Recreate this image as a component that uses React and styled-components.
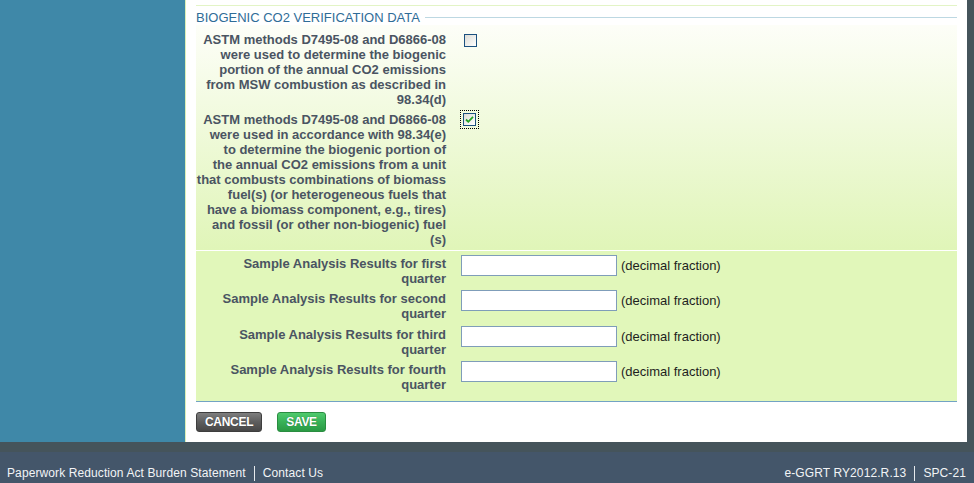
import React from "react";
import styled, { createGlobalStyle } from "styled-components";

const GlobalStyle = createGlobalStyle`
  html, body {
    margin: 0;
    padding: 0;
    background: #44566a;
    font-family: "Liberation Sans", Arial, sans-serif;
  }
`;

const Page = styled.div`
  display: flex;
  flex-direction: column;
  width: 974px;
  height: 483px;
  overflow: hidden;
`;

const Main = styled.div`
  flex: 1;
  display: flex;
  background: #45545b;
  padding: 0 7px 10px 0;
  min-height: 0;
`;

const Sidebar = styled.div`
  width: 185px;
  flex-shrink: 0;
  background: #3f88a8;
`;

const Content = styled.div`
  flex: 1;
  background: #fff;
  border-left: 1px solid #dcefb6;
  padding: 5px 10px 10px 10px;
  display: flex;
  flex-direction: column;
`;

const Section = styled.div`
  border-top: 1px solid #e3f4c6;
`;

const Legend = styled.div`
  display: flex;
  align-items: center;
  height: 16px;
  margin-top: 3px;
  font-size: 13px;
  color: #2f6c97;
  text-transform: uppercase;
  white-space: nowrap;

  &::after {
    content: "";
    flex: 1;
    height: 1px;
    margin-left: 5px;
    background: #bdd8e2;
  }
`;

const CheckBody = styled.div`
  background: linear-gradient(#fdfef8, #e0f5b8);
  padding: 7px 0 3px;
  display: flex;
  flex-direction: column;
  gap: 5px;
`;

const InputBody = styled.div`
  background: #e1f7ba;
  border-top: 1px solid #fff;
  border-bottom: 1px solid #72a3c4;
  padding: 4px 0 4px;
  display: flex;
  flex-direction: column;
`;

const Row = styled.div`
  display: grid;
  grid-template-columns: 250px 1fr;
  column-gap: 15px;
  align-items: start;
  height: ${(p) => (p.$h ? `${p.$h}px` : "auto")};
`;

const Label = styled.div`
  text-align: right;
  font-size: 13px;
  font-weight: bold;
  line-height: 15px;
  color: #4a5462;
  white-space: nowrap;
  margin-top: ${(p) => p.$offset || 0}px;
`;

const Control = styled.div`
  display: flex;
  align-items: center;
  gap: 4px;
`;

const Focus = styled.span`
  display: inline-flex;
  padding: 2px;
  margin: ${(p) => (p.$focused ? "-1px 0 0 0" : "0 0 0 1px")};
  outline: ${(p) => (p.$focused ? "1px dotted #000" : "none")};
`;

const Box = styled.span`
  display: inline-flex;
  align-items: center;
  justify-content: center;
  width: 11px;
  height: 11px;
  border: 1px solid #1c5180;
  background: linear-gradient(135deg, #dcdcd6, #fff);
`;

const TextInput = styled.input`
  box-sizing: border-box;
  width: 156px;
  height: 21px;
  border: 1px solid #7f9db9;
  background: #fff;
  padding: 1px 3px;
  margin: 0;
  font-family: inherit;
  font-size: 12px;
`;

const Hint = styled.span`
  font-size: 13px;
  color: #1e1e1e;
`;

const Buttons = styled.div`
  display: flex;
  gap: 15px;
  margin-top: 10px;
`;

const Button = styled.button`
  height: 20px;
  padding: 0 8px;
  border-radius: 3px;
  font-family: inherit;
  font-size: 12px;
  font-weight: bold;
  letter-spacing: -0.3px;
  color: #fff;
  text-shadow: 0 0 1px rgba(0, 0, 0, 0.4);
  cursor: pointer;
  border: 1px solid ${(p) => (p.$variant === "save" ? "#2a8d41" : "#3e3e3e")};
  background: ${(p) =>
    p.$variant === "save"
      ? "linear-gradient(#4fca6d, #38b157 50%, #2a9a44)"
      : "linear-gradient(#7e7e7e, #5d5d5d 50%, #474747)"};
`;

const Footer = styled.div`
  height: 31px;
  box-sizing: border-box;
  padding: 12px 8px 0 7px;
  background: #44566a;
  display: flex;
  justify-content: space-between;
  font-size: 12px;
  letter-spacing: 0.1px;
  line-height: 15px;
  color: #f2f4f6;
`;

const Links = styled.div`
  display: flex;
  align-items: center;
`;

const Sep = styled.span`
  width: 1px;
  height: 15px;
  background: #e6e9ec;
  margin: 0 8px;
`;

function Checkbox({ checked, focused }) {
  return (
    <Focus $focused={focused}>
      <Box>
        {checked ? (
          <svg width="9" height="9" viewBox="0 0 9 9">
            <path
              d="M1 4.5 L3.3 6.8 L8 1.8"
              fill="none"
              stroke="#22a322"
              strokeWidth="1.8"
            />
          </svg>
        ) : null}
      </Box>
    </Focus>
  );
}

const checkRows = [
  {
    lines: [
      "ASTM methods D7495-08 and D6866-08",
      "were used to determine the biogenic",
      "portion of the annual CO2 emissions",
      "from MSW combustion as described in",
      "98.34(d)",
    ],
    checked: false,
  },
  {
    lines: [
      "ASTM methods D7495-08 and D6866-08",
      "were used in accordance with 98.34(e)",
      "to determine the biogenic portion of",
      "the annual CO2 emissions from a unit",
      "that combusts combinations of biomass",
      "fuel(s) (or heterogeneous fuels that",
      "have a biomass component, e.g., tires)",
      "and fossil (or other non-biogenic) fuel",
      "(s)",
    ],
    checked: true,
  },
];

const quarters = ["first", "second", "third", "fourth"];

export default function App() {
  return (
    <Page>
      <GlobalStyle />
      <Main>
        <Sidebar />
        <Content>
          <Section>
            <Legend>Biogenic CO2 Verification Data</Legend>
            <CheckBody>
              {checkRows.map((row, i) => (
                <Row key={i}>
                  <Label>
                    {row.lines.map((l, j) => (
                      <div key={j}>{l}</div>
                    ))}
                  </Label>
                  <Control>
                    <Checkbox checked={row.checked} focused={row.checked} />
                  </Control>
                </Row>
              ))}
            </CheckBody>
            <InputBody>
              {quarters.map((q) => (
                <Row key={q} $h={35.4}>
                  <Label $offset={1}>
                    <div>Sample Analysis Results for {q}</div>
                    <div>quarter</div>
                  </Label>
                  <Control>
                    <TextInput type="text" />
                    <Hint>(decimal fraction)</Hint>
                  </Control>
                </Row>
              ))}
            </InputBody>
          </Section>
          <Buttons>
            <Button $variant="cancel">CANCEL</Button>
            <Button $variant="save">SAVE</Button>
          </Buttons>
        </Content>
      </Main>
      <Footer>
        <Links>
          <span>Paperwork Reduction Act Burden Statement</span>
          <Sep />
          <span>Contact Us</span>
        </Links>
        <Links>
          <span>e-GGRT RY2012.R.13</span>
          <Sep />
          <span>SPC-21</span>
        </Links>
      </Footer>
    </Page>
  );
}
